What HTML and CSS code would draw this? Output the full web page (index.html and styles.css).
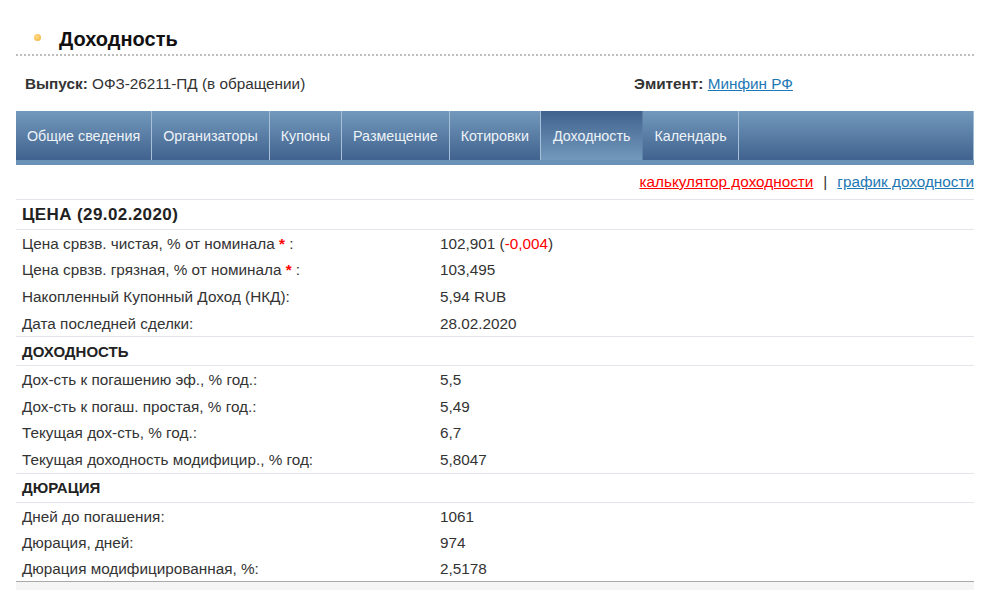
FILE: index.html
```html
<!DOCTYPE html>
<html lang="ru">
<head>
<meta charset="utf-8">
<title>Доходность</title>
<link rel="stylesheet" href="styles.css">
</head>
<body>
<div class="page">
  <h1 class="title"><span class="bullet"></span>Доходность</h1>
  <div class="meta">
    <div class="issue"><b>Выпуск:</b> ОФЗ-26211-ПД (в обращении)</div>
    <div class="emitent"><b>Эмитент:</b> <a href="#" class="blue">Минфин РФ</a></div>
  </div>
  <nav class="tabs">
    <a class="tab" href="#">Общие сведения</a>
    <a class="tab" href="#">Организаторы</a>
    <a class="tab" href="#">Купоны</a>
    <a class="tab" href="#">Размещение</a>
    <a class="tab" href="#">Котировки</a>
    <a class="tab active" href="#">Доходность</a>
    <a class="tab" href="#">Календарь</a>
    <span class="tab-fill"></span>
  </nav>
  <div class="strip"></div>
  <div class="links">
    <a href="#" class="red">калькулятор доходности</a>
    <span class="sep">|</span>
    <a href="#" class="blue">график доходности</a>
  </div>
  <table class="data">
    <tr class="head first"><td colspan="2">ЦЕНА (29.02.2020)</td></tr>
    <tr><td class="lbl">Цена срвзв. чистая, % от номинала <span class="star">*</span> :</td><td>102,901 (<span class="neg">-0,004</span>)</td></tr>
    <tr><td class="lbl">Цена срвзв. грязная, % от номинала <span class="star">*</span> :</td><td>103,495</td></tr>
    <tr><td class="lbl">Накопленный Купонный Доход (НКД):</td><td>5,94 RUB</td></tr>
    <tr><td class="lbl">Дата последней сделки:</td><td>28.02.2020</td></tr>
    <tr class="head"><td colspan="2">ДОХОДНОСТЬ</td></tr>
    <tr><td class="lbl">Дох-сть к погашению эф., % год.:</td><td>5,5</td></tr>
    <tr><td class="lbl">Дох-сть к погаш. простая, % год.:</td><td>5,49</td></tr>
    <tr><td class="lbl">Текущая дох-сть, % год.:</td><td>6,7</td></tr>
    <tr><td class="lbl">Текущая доходность модифицир., % год:</td><td>5,8047</td></tr>
    <tr class="head"><td colspan="2">ДЮРАЦИЯ</td></tr>
    <tr><td class="lbl">Дней до погашения:</td><td>1061</td></tr>
    <tr><td class="lbl">Дюрация, дней:</td><td>974</td></tr>
    <tr class="last"><td class="lbl">Дюрация модифицированная, %:</td><td>2,5178</td></tr>
  </table>
  <div class="footer-bg"></div>
</div>
</body>
</html>
```

FILE: styles.css
```css
html, body {
  margin: 0;
  padding: 0;
  background: #fff;
}
body {
  font-family: "Liberation Sans", Arial, sans-serif;
  font-size: 15.3px;
  color: #333;
}
.page {
  margin: 0 10px 0 16px;
  padding-top: 25px;
}
.title {
  display: flex;
  align-items: center;
  margin: 0;
  height: 29px;
  font-size: 20px;
  font-weight: bold;
  color: #111;
  padding-left: 18px;
  border-bottom: 2px dotted #bdbdbd;
}
.bullet {
  width: 7px;
  height: 7px;
  border-radius: 50%;
  background: radial-gradient(circle at 40% 40%, #ffd98a, #f0b030);
  margin-right: 18px;
  position: relative;
  top: -2px;
}
.meta {
  display: flex;
  height: 55px;
  align-items: center;
  padding-left: 9px;
  color: #333;
}
.meta b { color: #333; }
.issue { width: 609px; }
.blue { color: #1e78b4; text-decoration: underline; }
.red { color: #f00; text-decoration: underline; }
.tabs {
  display: flex;
  height: 49px;
  background: linear-gradient(#7399bc, #40628e);
  border-right: 1px solid #9fbcd6;
}
.tab {
  display: flex;
  align-items: center;
  padding: 0 11px;
  color: #eef3f8;
  text-decoration: none;
  border-right: 1px solid #a7c0d8;
  font-size: 14.3px;
}
.tab.active {
  background: linear-gradient(#40628e, #7399bc);
  border-right: 1px solid #5c7fa6;
  padding: 0 12px;
}
.tab-fill { flex: 1; }
.strip {
  height: 5px;
  background: #6a91b6;
}
.links {
  display: flex;
  justify-content: flex-end;
  align-items: center;
  gap: 10px;
  height: 34px;
  border-bottom: 1px solid #e2e6ea;
}
.sep { color: #333; }
.data {
  width: 100%;
  border-collapse: collapse;
}
.data td {
  padding: 1px 0 0 6px;
  height: 25.6px;
  vertical-align: middle;
  white-space: nowrap;
}
.data td.lbl { width: 412px; }
.data tr.head td {
  height: 28px;
  padding-top: 0;
  font-weight: bold;
  font-size: 15px;
  color: #222;
  border-bottom: 1px solid #e2e6ea;
}
.data tr.head.first td {
  font-size: 17px;
  letter-spacing: 0.4px;
  height: 29px;
}
.data tr.head:not(.first) td { border-top: 1px solid #e2e6ea; }
.data tr.last td { border-bottom: 1px solid #a9a9a9; height: 24px; }
.star { color: #f00; font-weight: bold; }
.neg { color: #f00; }
.footer-bg {
  height: 20px;
  background: #f5f5f5;
}
```
